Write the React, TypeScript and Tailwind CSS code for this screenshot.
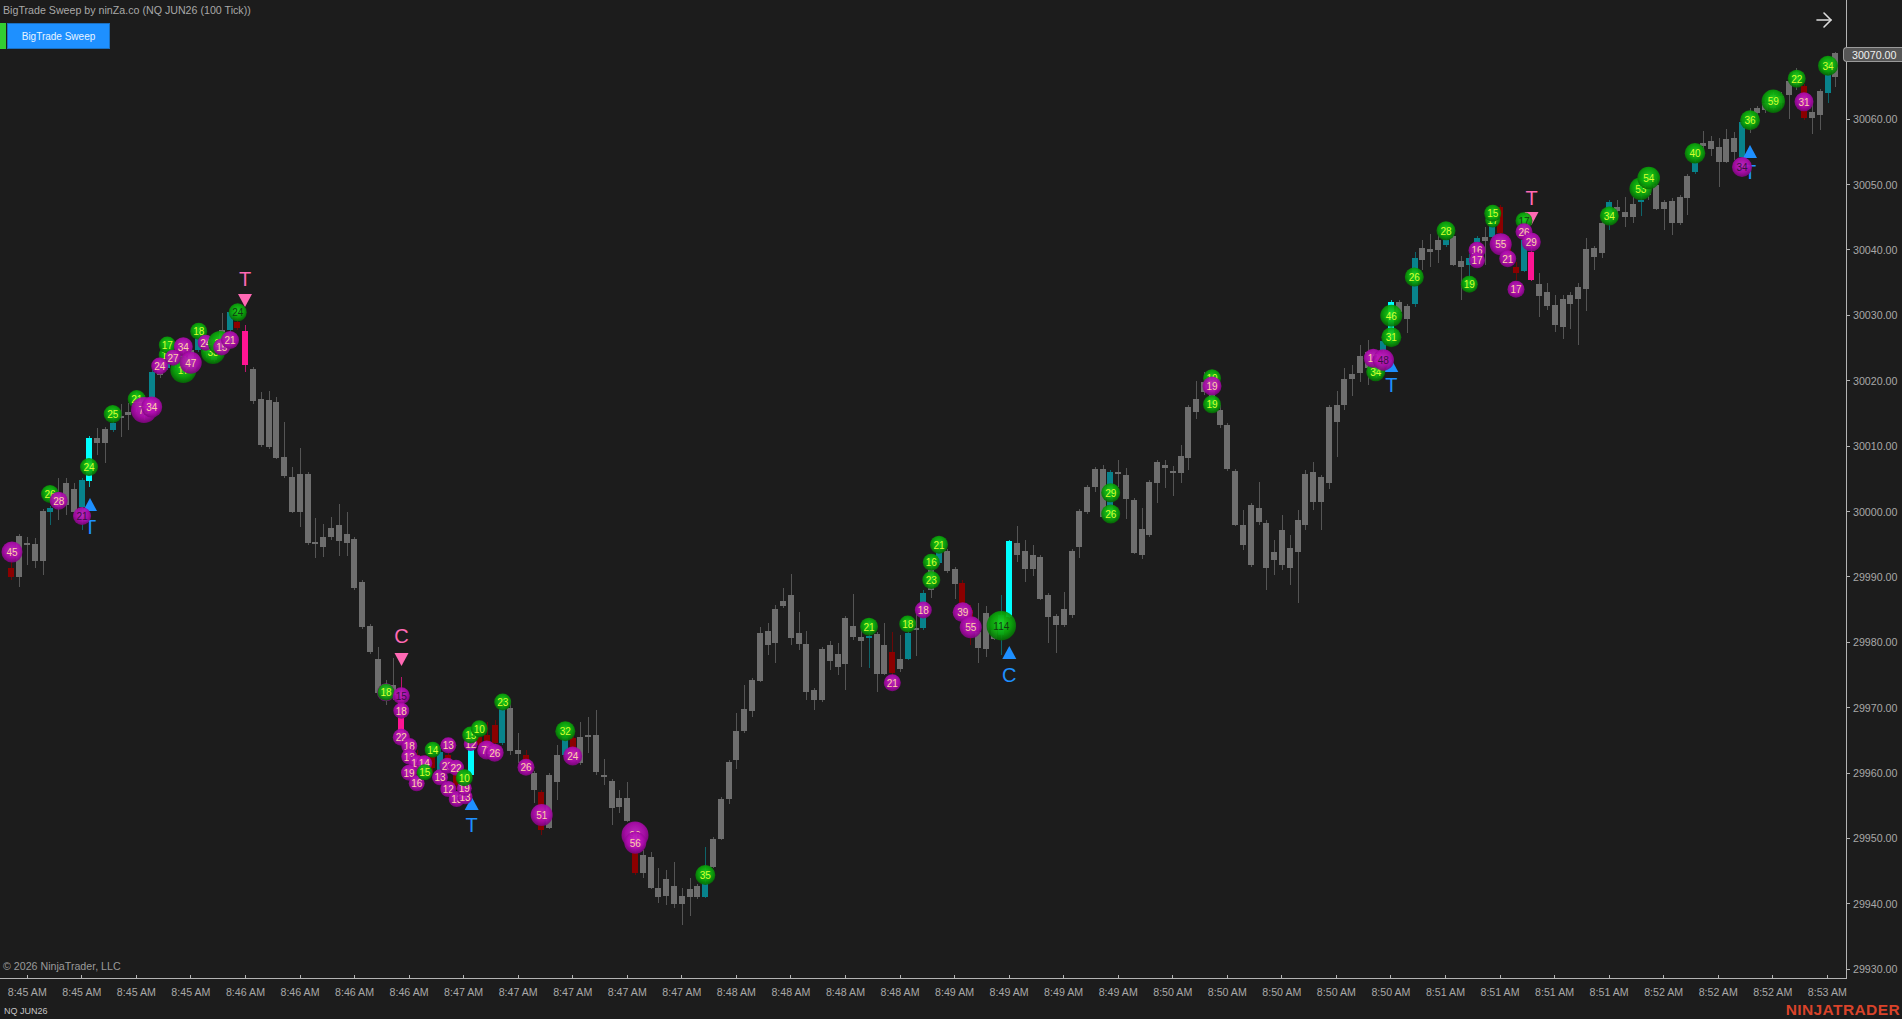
import { ArrowRight } from "lucide-react";

// body top, body bottom, wick top, wick bottom, colour (default gray)
type Candle = [number, number, number?, number?, string?];
type Bubble = [number, number, number, string, "g" | "p", number?];

const FILL: Record<string, string> = {
  g: "#6e6e6e",
  t: "#08838c",
  c: "#00ffff",
  r: "#8b0000",
  p: "#ff1493",
};

const BAR_X0 = 11.4;
const BAR_STEP = 7.795;

const candles: Candle[] = [
  // 8:45
  [568, 577, 560, 580, "r"], [536, 577, 534, 587], [543, 545, 537, 565], [544, 561, 538, 568], [511, 561, 509, 575],
  [508, 512, 506, 525, "t"], [493, 507, 478, 520], [483, 505, 478, 515], [489, 512, 483, 517], [480, 507, 478, 530, "t"],
  [438, 481, 436, 487, "c"], [438, 443, 428, 455], [429, 443, 427, 463], [423, 430, 410, 432, "t"], [416, 418, 404, 437],
  [412, 415, 403, 430], [398, 406, 392, 412], [400, 412, 395, 420], [372, 397, 370, 398, "t"], [365, 375, 360, 378],
  [350, 368, 345, 370, "t"], [352, 365, 345, 368], [355, 372, 350, 375], [350, 365, 345, 370], [338, 350, 335, 352, "t"],
  [342, 352, 338, 358], [345, 360, 340, 362], [330, 345, 313, 350], [312, 330, 308, 332, "t"], [322, 328, 318, 330, "r"],
  [331, 365, 325, 372, "p"],
  // 8:46
  [369, 401, 367, 404], [399, 445, 392, 447], [400, 447, 391, 449], [402, 458, 397, 459], [457, 476, 422, 478],
  [477, 512, 467, 513], [474, 512, 448, 527], [474, 543, 472, 545], [542, 544, 518, 558], [537, 547, 524, 557],
  [528, 537, 517, 540], [525, 541, 504, 556], [534, 543, 512, 556], [539, 588, 537, 590], [582, 627, 580, 629],
  [626, 652, 624, 654], [659, 693, 647, 695], [684, 697, 680, 705], [685, 695, 658, 700], [700, 733, 677, 738, "p"],
  [740, 760, 735, 765, "r"], [755, 770, 750, 775, "r"], [760, 775, 755, 780, "r"], [757, 768, 752, 772, "r"], [752, 770, 748, 772, "t"],
  [755, 762, 750, 766, "r"], [770, 785, 765, 790, "r"], [778, 790, 772, 795, "r"], [747, 775, 745, 777, "c"], [737, 745, 725, 748, "r"],
  [735, 750, 722, 752, "r"], [725, 743, 720, 745, "r"], [708, 743, 706, 745, "t"], [708, 751, 700, 755], [750, 754, 733, 763],
  // 8:47
  [755, 770, 750, 775, "r"], [773, 790, 771, 803], [792, 830, 790, 835, "r"], [775, 828, 773, 829], [755, 782, 745, 800],
  [737, 755, 735, 757, "t"], [738, 757, 736, 759, "r"], [737, 763, 722, 765], [735, 737, 717, 753], [735, 772, 710, 775],
  [775, 777, 759, 785], [781, 808, 779, 825], [798, 807, 790, 813], [798, 821, 782, 822], [853, 873, 845, 875, "r"],
  [855, 873, 850, 878], [857, 888, 852, 889], [888, 897, 868, 903], [879, 896, 870, 905], [886, 904, 862, 908],
  [896, 904, 888, 925], [889, 897, 878, 916], [886, 897, 884, 899], [883, 897, 847, 898, "t"], [839, 867, 837, 868],
  [799, 839, 797, 840], [762, 799, 760, 804], [731, 760, 713, 769], [709, 731, 685, 733], [680, 711, 678, 717],
  // 8:48
  [633, 681, 627, 682], [631, 645, 623, 655], [609, 643, 605, 663], [601, 606, 588, 608], [595, 638, 574, 645],
  [633, 644, 612, 650], [644, 692, 631, 700], [690, 700, 688, 710], [649, 700, 647, 702], [645, 661, 641, 670],
  [654, 667, 643, 675], [618, 664, 616, 690], [626, 637, 594, 640], [637, 641, 625, 667], [636, 638, 620, 668, "t"],
  [634, 674, 632, 692], [645, 674, 623, 675], [652, 673, 632, 676, "r"], [659, 669, 635, 672], [633, 659, 630, 660, "t"],
  [628, 630, 612, 656], [593, 628, 590, 630, "t"], [570, 590, 566, 598], [551, 563, 549, 565, "t"], [551, 571, 549, 573],
  [569, 584, 567, 599], [583, 603, 580, 605, "r"], [610, 625, 605, 645, "r"], [632, 648, 603, 663], [613, 649, 606, 657],
  [630, 639, 620, 640], [615, 635, 595, 655, "t"], [541, 617, 540, 618, "c"],
  // 8:49
  [543, 555, 526, 562], [551, 569, 540, 582], [555, 569, 545, 576], [557, 599, 555, 600], [595, 617, 593, 643],
  [616, 625, 614, 653], [609, 625, 592, 627], [551, 615, 549, 618], [511, 547, 509, 558], [487, 512, 485, 514],
  [469, 487, 467, 492], [469, 517, 465, 518], [472, 517, 470, 518, "t"], [472, 474, 460, 487], [475, 499, 468, 519],
  [500, 553, 498, 554], [529, 555, 508, 559], [482, 535, 480, 537], [462, 483, 460, 503], [465, 468, 460, 488],
  [471, 473, 466, 496], [456, 473, 445, 483], [407, 458, 405, 470], [399, 412, 381, 419], [382, 392, 372, 395],
  [385, 405, 380, 408], [410, 425, 405, 428], [425, 469, 423, 471],
  // 8:50
  [471, 525, 469, 526], [525, 545, 510, 550], [505, 565, 503, 567], [508, 522, 482, 525], [523, 568, 520, 590],
  [552, 560, 540, 575], [530, 565, 515, 570], [548, 568, 535, 585], [520, 552, 510, 603], [474, 525, 470, 530],
  [472, 502, 462, 510], [477, 502, 475, 530], [407, 483, 405, 489], [405, 422, 391, 457], [379, 405, 368, 410],
  [374, 379, 365, 396], [356, 373, 345, 382], [352, 368, 340, 385], [360, 375, 355, 378], [341, 350, 339, 352, "t"],
  [302, 340, 300, 342, "c"], [302, 312, 300, 314], [306, 319, 304, 333], [258, 304, 252, 307, "t"], [248, 260, 240, 270],
  [249, 252, 234, 267], [240, 250, 230, 263], [240, 245, 238, 247, "t"], [236, 265, 232, 266], [261, 267, 256, 300],
  // 8:51
  [258, 265, 254, 290, "t"], [238, 242, 236, 244, "t"], [237, 241, 227, 265], [213, 237, 210, 239, "t"], [207, 233, 205, 235, "r"],
  [240, 255, 236, 258, "r"], [267, 273, 262, 280, "r"], [240, 271, 238, 272, "t"], [252, 280, 245, 281, "p"], [284, 296, 273, 317],
  [292, 306, 283, 310], [305, 325, 295, 332], [299, 327, 295, 339], [295, 304, 292, 329], [287, 299, 283, 345],
  [249, 289, 238, 311], [248, 257, 246, 270], [223, 253, 220, 258], [202, 212, 200, 230, "t"], [207, 211, 200, 220],
  // 8:52
  [212, 217, 197, 227], [204, 217, 197, 223], [200, 202, 195, 216, "t"], [180, 195, 175, 200], [185, 209, 178, 210],
  [202, 209, 200, 230], [201, 223, 198, 235], [197, 223, 195, 225], [176, 198, 174, 215], [163, 172, 160, 174, "t"],
  [143, 146, 131, 150], [141, 149, 136, 156], [147, 162, 138, 187], [139, 162, 129, 163], [138, 152, 132, 160],
  [122, 157, 120, 158, "t"], [115, 125, 108, 133], [108, 113, 106, 116], [103, 110, 100, 113], [95, 108, 92, 110],
  [96, 103, 92, 108], [81, 95, 78, 119], [72, 85, 68, 90], [86, 118, 84, 120, "r"], [112, 118, 100, 134],
  [91, 115, 89, 130], [75, 93, 73, 103, "t"], [53, 77, 52, 87],
];

// x, y, radius, label, kind, text tone (1 = dark)
const bubbles: Bubble[] = [
  [12, 552, 10.5, "45", "p"],
  [50, 494, 9, "26", "g"],
  [58.7, 500.7, 9, "28", "p"],
  [89, 467, 9, "24", "g"],
  [82, 516, 9, "21", "p", 1],
  [112.7, 414, 9, "25", "g"],
  [136.7, 399, 9, "21", "g"],
  [144, 410, 13, "73", "p"],
  [151.7, 407, 10.5, "34", "p"],
  [166.7, 355, 8, "11", "g"],
  [167.3, 345, 8.5, "17", "g"],
  [183.3, 370, 13, "17", "g"],
  [159.7, 366, 8.5, "24", "p"],
  [183.3, 346.7, 9.5, "34", "p"],
  [173, 357.7, 8, "27", "p"],
  [190.7, 362.7, 11, "47", "p"],
  [198.7, 331.3, 8.5, "18", "g"],
  [213, 352, 12, "38", "g"],
  [205.7, 342.7, 8, "24", "p"],
  [220, 343, 12, "30", "g"],
  [221.7, 347, 8.5, "15", "p"],
  [230, 340, 9, "21", "p"],
  [237.7, 312.3, 9, "24", "g", 1],

  [386, 692.3, 9, "18", "p"],
  [386, 692.3, 8.5, "18", "g"],
  [401.3, 695.7, 8.5, "15", "p", 1],
  [401.3, 710.7, 8, "18", "p"],
  [401.3, 737.3, 8.5, "22", "p"],
  [409.3, 746, 8, "18", "p"],
  [409.3, 756.7, 8, "13", "p"],
  [416.7, 763, 8, "14", "p"],
  [424.3, 763.3, 8, "14", "p"],
  [409, 772.7, 8, "19", "p"],
  [416.7, 783.3, 8, "16", "p"],
  [424.7, 772.3, 8, "15", "g"],
  [432.7, 749.7, 8, "14", "g"],
  [448.3, 745.3, 8, "13", "p"],
  [440, 777.3, 8, "13", "p"],
  [447.3, 765.7, 8, "23", "p"],
  [456, 767.7, 8, "22", "p"],
  [448.3, 789, 8, "12", "p"],
  [456.7, 799, 8, "13", "p"],
  [465, 796.7, 7.5, "13", "p"],
  [464.3, 788.3, 7.5, "19", "p"],
  [464.3, 777.7, 8.5, "10", "g"],
  [470.7, 744, 7, "12", "p"],
  [470.7, 735, 8.5, "15", "g"],
  [479.3, 728.7, 8.5, "10", "g"],
  [486.7, 750, 9.5, "72", "p"],
  [494.7, 752.7, 9, "26", "p"],
  [502.7, 702, 8.5, "23", "g"],
  [526, 767.3, 8.5, "26", "p"],
  [541.7, 815, 11, "51", "p"],
  [565.3, 731.3, 10, "32", "g"],
  [572.7, 756, 9.5, "24", "p"],
  [635, 835, 13.5, "96", "p"],
  [635.3, 842.7, 11, "56", "p"],
  [705.3, 875, 10, "35", "g"],

  [869, 626.7, 9, "21", "g"],
  [892.3, 682.7, 8.5, "21", "p"],
  [907.7, 624, 8.5, "18", "g"],
  [923.3, 610, 8.5, "18", "p"],
  [931.3, 580, 9, "23", "g"],
  [931.3, 562.3, 8.5, "16", "g"],
  [939, 544.7, 9, "21", "g"],
  [962.7, 612.3, 10, "39", "p"],
  [970.7, 627.3, 11, "55", "p"],
  [1001.3, 625.7, 14.7, "114", "g", 1],
  [1110.7, 492.7, 9.5, "29", "g"],
  [1110.7, 514, 9.5, "26", "g"],
  [1212, 378.3, 9, "19", "g"],
  [1212, 386, 9.5, "19", "p"],
  [1212, 404.3, 9, "19", "g"],

  [1375.7, 371.7, 9.5, "34", "g"],
  [1373.3, 358.3, 9.5, "12", "p"],
  [1383.3, 360, 10.7, "48", "p", 1],
  [1391.3, 315.7, 11, "46", "g"],
  [1391.3, 337.3, 10, "31", "g"],
  [1414.3, 277, 9.5, "26", "g"],
  [1446, 230.7, 9.5, "28", "g"],
  [1469.3, 284.3, 8.5, "19", "g"],
  [1477, 250.3, 8.5, "16", "p"],
  [1477, 260.3, 8, "17", "p"],
  [1492.7, 220, 7.5, "17", "g"],
  [1492.7, 213.3, 8.5, "15", "g"],
  [1500.7, 244.3, 11, "55", "p"],
  [1507.7, 258.7, 8.5, "21", "p"],
  [1516, 289.3, 8.5, "17", "p"],
  [1524, 220.7, 8.5, "17", "g", 1],
  [1524, 231.7, 8.5, "26", "p"],
  [1531.3, 242, 9.5, "29", "p"],

  [1609.3, 216, 9.5, "34", "g"],
  [1640.7, 188.7, 11.3, "53", "g"],
  [1648.7, 178, 11.3, "54", "g"],
  [1695, 153.3, 10.3, "40", "g"],
  [1742, 167, 10, "34", "p", 1],
  [1750, 120.3, 10, "36", "g"],
  [1773.3, 101.3, 11.7, "59", "g"],
  [1796.7, 78.7, 9, "22", "g"],
  [1804, 101.7, 9.5, "31", "p"],
  [1828, 65.7, 10, "34", "g"],
];

// x, tip y, direction, letter, letter y
const signals: [number, number, "up" | "down", string, number][] = [
  [245, 307, "down", "T", 279],
  [90, 498, "up", "T", 527],
  [401.5, 666, "down", "C", 636],
  [471.7, 797, "up", "T", 825],
  [1009.3, 646, "up", "C", 675],
  [1391.3, 359, "up", "T", 385],
  [1531.5, 225, "down", "T", 198],
  [1750, 145, "up", "T", 172],
];

const prices = ["30060.00", "30050.00", "30040.00", "30030.00", "30020.00", "30010.00", "30000.00", "29990.00", "29980.00", "29970.00", "29960.00", "29950.00", "29940.00", "29930.00"];

const times = [
  ...Array(4).fill("8:45 AM"),
  ...Array(4).fill("8:46 AM"),
  ...Array(5).fill("8:47 AM"),
  ...Array(4).fill("8:48 AM"),
  ...Array(4).fill("8:49 AM"),
  ...Array(5).fill("8:50 AM"),
  ...Array(4).fill("8:51 AM"),
  ...Array(3).fill("8:52 AM"),
  "8:53 AM",
] as string[];

function textColor(kind: "g" | "p", dark?: number) {
  if (dark) return kind === "g" ? "#123a12" : "#3a0f45";
  return kind === "g" ? "#d6ff2e" : "#ffd0a8";
}

function Chart() {
  return (
    <svg width={1846} height={978} className="block">
      <defs>
        <radialGradient id="ball-g" cx="50%" cy="42%" r="58%">
          <stop offset="0%" stopColor="#1fdc1f" />
          <stop offset="60%" stopColor="#0aa80a" />
          <stop offset="100%" stopColor="#056805" />
        </radialGradient>
        <radialGradient id="ball-p" cx="50%" cy="42%" r="58%">
          <stop offset="0%" stopColor="#c82ac8" />
          <stop offset="60%" stopColor="#b00cb0" />
          <stop offset="100%" stopColor="#7d047d" />
        </radialGradient>
      </defs>

      {candles.map(([top, bot, wt, wb, color], i) => {
        const x = Math.round(BAR_X0 + BAR_STEP * i);
        const fill = FILL[color ?? "g"];
        return (
          <g key={i}>
            <rect x={x} y={wt ?? top} width={1} height={(wb ?? bot) - (wt ?? top)} fill={fill} opacity={0.7} />
            <rect x={x - 3} y={top} width={6} height={bot - top} fill={fill} />
          </g>
        );
      })}

      {signals.map(([x, y, dir, letter, ly], i) => {
        const color = dir === "up" ? "#1e90ff" : "#ff69b4";
        const pts =
          dir === "up"
            ? `${x},${y} ${x + 7},${y + 13} ${x - 7},${y + 13}`
            : `${x},${y} ${x + 7},${y - 13} ${x - 7},${y - 13}`;
        return (
          <g key={i}>
            <polygon points={pts} fill={color} />
            <text x={x} y={ly} fill={color} fontSize={20} textAnchor="middle" dominantBaseline="central">
              {letter}
            </text>
          </g>
        );
      })}

      {bubbles.map(([x, y, r, label, kind, dark], i) => (
        <g key={i}>
          <circle cx={x} cy={y} r={r} fill={`url(#ball-${kind})`} opacity={0.92} />
          <text x={x} y={y + 0.5} fill={textColor(kind, dark)} fontSize={10} textAnchor="middle" dominantBaseline="central">
            {label}
          </text>
        </g>
      ))}
    </svg>
  );
}

export default function App() {
  return (
    <div className="flex h-[1019px] w-[1902px] flex-col overflow-hidden bg-[#1c1c1c] font-['Liberation_Sans',sans-serif] text-[#a8a8a8]">
      <div className="flex h-[979px]">
        <div className="relative h-[979px] w-[1847px] border-r border-b border-[#b4b4b4]">
          <Chart />
          <div className="absolute top-[3px] left-[3px] text-[10.67px] leading-[14px]">
            BigTrade Sweep by ninZa.co (NQ JUN26 (100 Tick))
          </div>
          <div className="absolute top-[23px] left-0 flex h-[26px] gap-px">
            <div className="w-[6px] bg-[#32cd32]" />
            <div className="flex w-[103px] items-center justify-center border border-[#1a6fc0] bg-[#1e90ff] text-[10px] text-[#e8f4ff]">
              BigTrade Sweep
            </div>
          </div>
          <ArrowRight className="absolute top-[7px] left-[1812px] h-[26px] w-[24px] text-[#dcdcdc]" strokeWidth={1.6} />
          <div className="absolute bottom-[5px] left-[3px] text-[10.67px] leading-[14px] text-[#9a9a9a]">
            © 2026 NinjaTrader, LLC
          </div>
        </div>

        <div className="relative flex-1 pt-[86.5px] text-[10.67px]">
          {prices.map((p) => (
            <div key={p} className="flex h-[65.4px] items-center gap-[3px]">
              <span className="h-px w-[3px] bg-[#b4b4b4]" />
              <span>{p}</span>
            </div>
          ))}
          <div className="absolute top-[47px] -left-[4px] flex h-[15px] w-[59px] items-center rounded-l-sm border border-r-0 border-[#9a9a9a] bg-[#565656] pl-[8px] text-[#f0f0f0]">
            30070.00
          </div>
        </div>
      </div>

      <div className="flex h-[26px] text-[10.67px]">
        {times.map((t, i) => (
          <div key={i} className="relative flex w-[54.56px] shrink-0 justify-center pt-[6px] leading-[14px]">
            <span className="absolute -top-[4px] h-[3px] w-px bg-[#b4b4b4]" />
            <span>{t}</span>
          </div>
        ))}
      </div>

      <div className="flex flex-1 items-start justify-between pr-[2px] pl-[4px]">
        <span className="text-[9px] leading-[12px] text-[#c4c4c4]">NQ JUN26</span>
        <span className="-mt-[3px] text-[15.5px] leading-[16px] font-bold tracking-[0.4px] text-[#d9432a]">NINJATRADER</span>
      </div>
    </div>
  );
}
